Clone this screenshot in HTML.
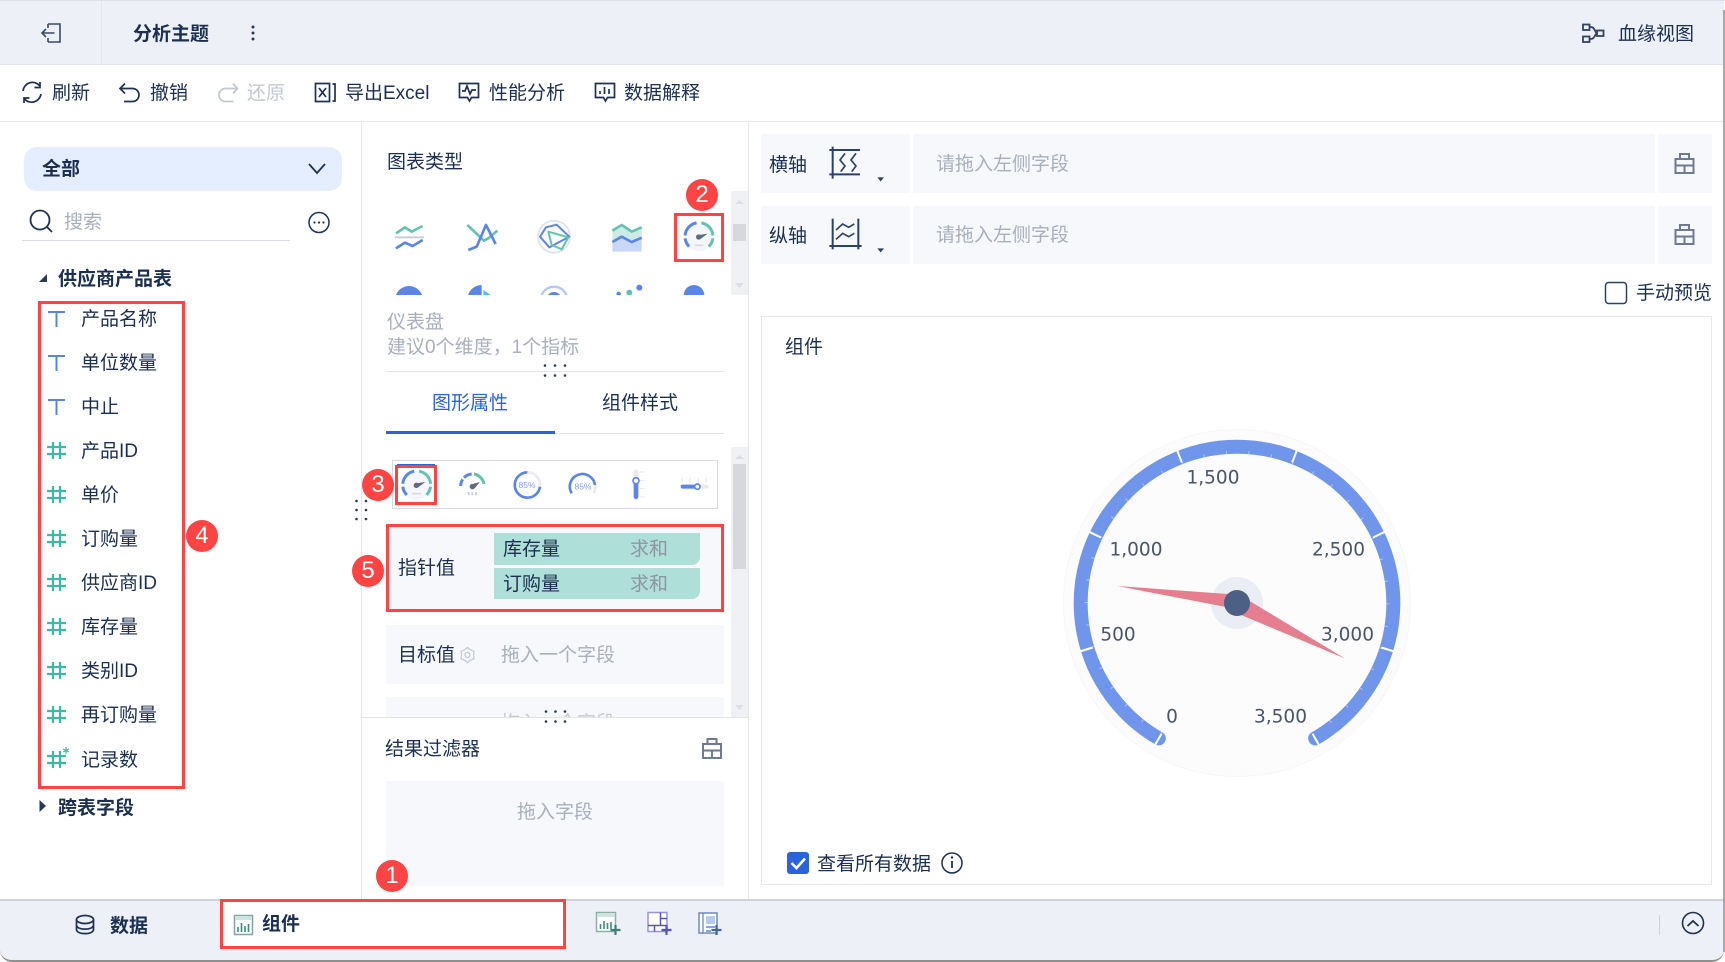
<!DOCTYPE html>
<html lang="zh">
<head>
<meta charset="utf-8">
<title>分析主题</title>
<style>
html,body{margin:0;padding:0;background:#fff;width:1725px;height:962px;overflow:hidden}
body{font-family:"Liberation Sans","Noto Sans CJK SC",sans-serif;color:#1c2f50;position:relative}
.b{position:absolute}
.t{position:absolute;white-space:nowrap;font-size:19px;line-height:26px;height:26px;margin:2px 0 0 0}
.bd{font-weight:700}
.g{color:#a9afbb}
.box{position:absolute;background:#f7f8fc}
.red{position:absolute;border:3px solid #ff4444;box-sizing:border-box}
.badge{position:absolute;width:32px;height:32px;border-radius:50%;background:#ff4444;color:#fff;text-align:center;font-size:24px;line-height:32px;font-family:"Liberation Sans",sans-serif}
svg.o{position:absolute;left:0;top:0}
.pill{position:absolute;left:494px;width:206px;background:#aedfd8;border-radius:0 0 8px 0}
</style>
</head>
<body>
<!-- window frame -->
<div class="b" style="left:0;top:0;width:1725px;height:1px;background:#dfe1e6"></div>
<div class="b" style="left:0;top:1px;width:1724px;height:63px;background:#edf0f6;border-bottom:1px solid #dfe3ec"></div>
<div class="b" style="left:101px;top:1px;width:1px;height:63px;background:#e3e6ee"></div>
<div class="b" style="left:0;top:121px;width:1724px;height:1px;background:#e6e8ee"></div>
<div class="b" style="left:361px;top:122px;width:1px;height:777px;background:#e6e8ee"></div>
<div class="b" style="left:748px;top:122px;width:1px;height:777px;background:#e6e8ee"></div>

<!-- top bar -->
<div class="t bd" style="left:133px;top:20px">分析主题</div>
<div class="t" style="left:1618px;top:20px">血缘视图</div>

<!-- toolbar -->
<div class="t" style="left:52px;top:79px">刷新</div>
<div class="t" style="left:150px;top:79px">撤销</div>
<div class="t" style="left:247px;top:79px;color:#c3c7d0">还原</div>
<div class="t" style="left:345px;top:79px">导出Excel</div>
<div class="t" style="left:489px;top:79px">性能分析</div>
<div class="t" style="left:624px;top:79px">数据解释</div>

<!-- left panel -->
<div class="b" style="left:24px;top:147px;width:318px;height:44px;border-radius:13px;background:#e5eeff"></div>
<div class="t bd" style="left:42px;top:155px">全部</div>
<div class="t g" style="left:64px;top:208px">搜索</div>
<div class="b" style="left:22px;top:240px;width:268px;height:1px;background:#d9dce6"></div>
<div class="t bd" style="left:58px;top:265px">供应商产品表</div>
<div class="t" style="left:81px;top:305px">产品名称</div>
<div class="t" style="left:81px;top:349px">单位数量</div>
<div class="t" style="left:81px;top:393px">中止</div>
<div class="t" style="left:81px;top:437px">产品ID</div>
<div class="t" style="left:81px;top:481px">单价</div>
<div class="t" style="left:81px;top:525px">订购量</div>
<div class="t" style="left:81px;top:569px">供应商ID</div>
<div class="t" style="left:81px;top:613px">库存量</div>
<div class="t" style="left:81px;top:657px">类别ID</div>
<div class="t" style="left:81px;top:701px">再订购量</div>
<div class="t" style="left:81px;top:746px">记录数</div>
<div class="t bd" style="left:58px;top:794px">跨表字段</div>

<!-- middle panel -->
<div class="t" style="left:387px;top:148px">图表类型</div>
<div class="b" style="left:731px;top:191px;width:17px;height:104px;background:#f0f1f4"></div>
<div class="b" style="left:733px;top:224px;width:13px;height:17px;background:#d6d8de"></div>
<div class="t g" style="left:387px;top:308px">仪表盘</div>
<div class="t g" style="left:387px;top:333px">建议0个维度，1个指标</div>
<div class="b" style="left:386px;top:371px;width:338px;height:1px;background:#e2e4ea"></div>
<div class="t" style="left:432px;top:389px;color:#2b63db">图形属性</div>
<div class="t" style="left:602px;top:389px">组件样式</div>
<div class="b" style="left:386px;top:433px;width:338px;height:1px;background:#e2e4ea"></div>
<div class="b" style="left:386px;top:431px;width:169px;height:3px;background:#2b63db"></div>
<div class="b" style="left:731px;top:447px;width:17px;height:270px;background:#f0f1f4"></div>
<div class="b" style="left:733px;top:464px;width:13px;height:105px;background:#d6d8de"></div>
<div class="b" style="left:392px;top:460px;width:326px;height:49px;box-sizing:border-box;border:1.5px solid #d6d9e4"></div>
<div class="b" style="left:397px;top:464px;width:38px;height:2px;background:#2b63db"></div>

<div class="box" style="left:386px;top:520px;width:338px;height:92px"></div>
<div class="pill" style="top:533px;height:32px"></div>
<div class="pill" style="top:568px;height:31px"></div>
<div class="t" style="left:503px;top:535px">库存量</div>
<div class="t" style="left:630px;top:535px;color:#8e95a3">求和</div>
<div class="t" style="left:503px;top:570px">订购量</div>
<div class="t" style="left:630px;top:570px;color:#8e95a3">求和</div>
<div class="t" style="left:398px;top:554px">指针值</div>

<div class="box" style="left:386px;top:625px;width:338px;height:59px"></div>
<div class="t" style="left:398px;top:641px">目标值</div>
<div class="t g" style="left:501px;top:641px">拖入一个字段</div>
<div class="box" style="left:386px;top:697px;width:338px;height:20px;overflow:hidden">
<div class="t" style="left:115px;top:12px;color:#c5c9d2">拖入一个字段</div>
</div>
<div class="b" style="left:362px;top:717px;width:386px;height:1px;background:#e2e4ea"></div>

<div class="t" style="left:385px;top:735px">结果过滤器</div>
<div class="box" style="left:386px;top:781px;width:338px;height:105px"></div>
<div class="t g" style="left:517px;top:798px">拖入字段</div>

<!-- right panel -->
<div class="box" style="left:761px;top:134px;width:149px;height:59px"></div>
<div class="box" style="left:913px;top:134px;width:742px;height:59px"></div>
<div class="box" style="left:1658px;top:134px;width:54px;height:59px"></div>
<div class="box" style="left:761px;top:206px;width:149px;height:58px"></div>
<div class="box" style="left:913px;top:206px;width:742px;height:58px"></div>
<div class="box" style="left:1658px;top:206px;width:54px;height:58px"></div>
<div class="t" style="left:769px;top:151px">横轴</div>
<div class="t" style="left:769px;top:222px">纵轴</div>
<div class="t g" style="left:936px;top:150px">请拖入左侧字段</div>
<div class="t g" style="left:936px;top:221px">请拖入左侧字段</div>
<div class="t" style="left:1636px;top:279px">手动预览</div>
<div class="b" style="left:761px;top:316px;width:951px;height:569px;box-sizing:border-box;border:1.5px solid #e6e8ee"></div>
<div class="t" style="left:785px;top:333px">组件</div>
<div class="t" style="left:817px;top:850px">查看所有数据</div>

<!-- bottom bar -->
<div class="b" style="left:0;top:899px;width:1724px;height:63px;box-sizing:border-box;background:#edf0f6;border-top:2px solid #d0d3de;border-bottom:2px solid #8f8f8f;border-radius:0 0 12px 12px"></div>
<div class="b" style="left:1723px;top:10px;width:2px;height:942px;background:#a8a8a8"></div>
<div class="b" style="left:222px;top:901px;width:343px;height:47px;background:#fff"></div>
<div class="t bd" style="left:110px;top:912px">数据</div>
<div class="t bd" style="left:262px;top:910px">组件</div>
<div class="b" style="left:1659px;top:915px;width:1px;height:20px;background:#d0d3de"></div>

<svg class="o" width="1725" height="962" viewBox="0 0 1725 962" fill="none">
<defs>
<g id="case" stroke="#6f7a8f" stroke-width="2"><path d="M1675.5 159h18v14h-18zM1680 159v-5h9v5M1675.5 165.500h18M1684.5 165.500v7.500"/></g>
<g id="gi" stroke-width="9">
<circle cx="1017" cy="320" r="44" fill="#f5f6f9"/>
<path d="M975.200 316.300A42 42 0 0 1 1009.700 278.600M987.300 349.700A42 42 0 0 1 975.300 325.100" stroke="#5b86e8"/>
<path d="M1024.300 278.600A42 42 0 0 1 1058.800 316.300M1058.700 325.100A42 42 0 0 1 1046.700 349.700" stroke="#62c4b0"/>
<circle cx="1016" cy="321" r="8" fill="#5f6b80"/>
<polygon points="1010,316 1043,311 1020,328" fill="#5f6b80"/>
<path d="M1004 346h26" stroke="#d6d9e2" stroke-width="5"/>
</g>
<clipPath id="cr"><rect x="360" y="190" width="370" height="105"/></clipPath>
</defs>

<!-- top bar icons -->
<path d="M48 24h12v18H48M48 24v4M48 38v4M54.500 33H42M46 29l-4 4 4 4" stroke="#3b4a63" stroke-width="1.600"/>
<g fill="#2a3a55"><circle cx="253" cy="27" r="1.500"/><circle cx="253" cy="33" r="1.500"/><circle cx="253" cy="39" r="1.500"/></g>
<g stroke="#33435f" stroke-width="1.800">
<rect x="1583" y="24.500" width="6.500" height="5.500"/><rect x="1583" y="36.500" width="6.500" height="5.500"/><rect x="1597" y="30.500" width="6.500" height="5.500"/>
<path d="M1589.500 27h1.500c4 0 4 6 6 6.300M1589.500 39h1.500c4 0 4-5.500 6-5.700"/>
</g>

<!-- toolbar icons -->
<g stroke="#1f3150" stroke-width="1.700">
<path d="M23 91a9.500 9.500 0 0 1 16.500-5.500M40 82v5.500h-5.500"/>
<path d="M41 94a9.500 9.500 0 0 1-16.500 5M24 103v-5h5.500"/>
<path d="M125 83.500l-5 5 5 5M120 88.500h12.500a6.500 6.500 0 0 1 0 13H124"/>
<path d="M315.500 83.500h14v18h-14zM319 88l7 9M326 88l-7 9M332.500 84h2.500v17h-2.500"/>
<path d="M459.500 83.500h19v14h-7l-2 3.500-2-3.500h-8zM462 91h3l2-5 3 8 2-4h4"/>
<path d="M595.500 83.500h19v14h-7l-2 3.500-2-3.500h-8zM600 94v-3M604.500 94v-7M609 94v-5"/>
</g>
<path d="M233 83.500l4.500 5-4.500 5M237.500 88.500h-12a6.500 6.500 0 0 0 0 13h8" stroke="#c3c7d0" stroke-width="1.700"/>

<!-- left icons -->
<path d="M309 164l8 9 8-9" stroke="#1f3150" stroke-width="1.800"/>
<circle cx="40" cy="220" r="9.500" stroke="#1f3150" stroke-width="1.800"/><path d="M47 227l5 5" stroke="#1f3150" stroke-width="1.800"/>
<circle cx="319" cy="222.500" r="10" stroke="#1f3150" stroke-width="1.500"/>
<g fill="#1f3150"><circle cx="314.500" cy="222.500" r="1.100"/><circle cx="319" cy="222.500" r="1.100"/><circle cx="323.500" cy="222.500" r="1.100"/></g>
<polygon points="39,282 47,282 47,274" fill="#2a3a55"/>
<polygon points="39.500,800 46,806 39.500,812" fill="#2a3a55"/>
<g stroke="#5b86d8" stroke-width="2"><path d="M48 312h17M56.500 312v15M48 356h17M56.500 356v15M48 400h17M56.500 400v15"/></g>
<g stroke="#3fb8a6" stroke-width="2.200">
<path d="M53 442v17M60 442v17M47 447h19M47 454h19"/>
<path d="M53 486v17M60 486v17M47 491h19M47 498h19"/>
<path d="M53 530v17M60 530v17M47 535h19M47 542h19"/>
<path d="M53 574v17M60 574v17M47 579h19M47 586h19"/>
<path d="M53 618v17M60 618v17M47 623h19M47 630h19"/>
<path d="M53 662v17M60 662v17M47 667h19M47 674h19"/>
<path d="M53 706v17M60 706v17M47 711h19M47 718h19"/>
<path d="M53 751v17M60 751v17M47 756h19M47 763h19"/>
</g>
<path d="M66 747v7M63 749l6 3M69 749l-6 3" stroke="#3fb8a6" stroke-width="1.200"/>

<!-- chart type icons (zoom coordinates) -->
<g clip-path="url(#cr)">
<g transform="translate(360,130) scale(.33333)" stroke-width="8" stroke-linejoin="round">
<polyline points="108,310 135,292 155,305 188,288" stroke="#62c4b0"/>
<path d="M105 322h87" stroke="#c9cdd8" stroke-width="6"/>
<polyline points="108,355 135,338 158,348 188,330" stroke="#5b86e8"/>

<polyline points="322,285 372,332 385,325 412,302" stroke="#62c4b0"/>
<polyline points="325,360 350,350 378,285 407,342" stroke="#5b86e8"/>

<circle cx="582" cy="320" r="48" stroke="#dfe2ea" stroke-width="5" fill="#fafbfc"/>
<polygon points="590,284 628,320 568,352 540,320 558,292" stroke="#5b86e8" stroke-width="6"/>
<polygon points="565,305 625,322 605,358 575,345" stroke="#62c4b0" stroke-width="6"/>

<polygon points="757,305 785,290 815,310 845,295 845,330 757,330" fill="#cdebe5" stroke="none"/>
<polyline points="757,302 785,285 815,305 845,292" stroke="#62c4b0"/>
<polygon points="757,338 785,322 815,338 845,325 845,365 757,365" fill="#c8d7f8" stroke="none"/>
<polyline points="757,336 785,320 815,336 845,323" stroke="#5b86e8"/>

<use href="#gi"/>

<circle cx="147" cy="510" r="42" fill="#5b86e8" stroke="none"/>
<path d="M365 465A42 42 0 1 0 365 550z" fill="#5b86e8" stroke="none"/>
<path d="M370 480 L392 495 L370 510z" fill="#4fc3f0" stroke="none"/>
<circle cx="582" cy="510" r="40" stroke="#b5c8f5" stroke-width="7"/>
<circle cx="582" cy="510" r="24" fill="#5b86e8" stroke="none"/>
<circle cx="776" cy="492" r="7" fill="#5b86e8" stroke="none"/>
<circle cx="808" cy="488" r="9" fill="#62c4b0" stroke="none"/>
<circle cx="838" cy="473" r="9" fill="#5b86e8" stroke="none"/>
<circle cx="1002" cy="496" r="31" fill="#5b86e8" stroke="none"/>
</g>
</g>
<polygon points="735,204 739.500,200 744,204" fill="#dcdee3"/>
<polygon points="735,283 739.500,288 744,283" fill="#dcdee3"/>

<!-- gauge subtype icons -->
<g transform="translate(340,430) scale(.33333)" stroke-linejoin="round">
<use href="#gi" transform="translate(-787,-155)"/>

<path d="M362 168A38 38 0 0 1 368 148" stroke="#5b86e8" stroke-width="9"/>
<path d="M372 143A38 38 0 0 1 395 132" stroke="#5b86e8" stroke-width="9"/>
<path d="M402 132A38 38 0 0 1 432 162" stroke="#62c4b0" stroke-width="9"/>
<circle cx="397" cy="170" r="8" fill="#5f6b80"/>
<polygon points="390,164 420,156 402,177" fill="#5f6b80"/>
<path d="M386 186v10M397 186v10M408 186v10" stroke="#c9cdd8" stroke-width="5"/>

<circle cx="562" cy="165" r="38" stroke="#eaecf1" stroke-width="8"/>
<path d="M562 127A38 38 0 1 0 600 170" stroke="#5b86e8" stroke-width="8"/>
<path d="M765 165Q768 178 761 190" stroke="#eaecf1" stroke-width="8"/>
<path d="M695 190A38 38 0 1 1 765 165" stroke="#5b86e8" stroke-width="8"/>

<path d="M888 125v78" stroke="#e8eaef" stroke-width="14" stroke-linecap="round"/>
<path d="M888 155v45" stroke="#5b86e8" stroke-width="14" stroke-linecap="round"/>
<circle cx="888" cy="152" r="9" fill="#fff" stroke="#5b86e8" stroke-width="5"/>
<path d="M900 126h14M900 152h14M900 176h14M900 201h14" stroke="#e8eaef" stroke-width="3"/>

<path d="M1028 170h72" stroke="#e8eaef" stroke-width="12" stroke-linecap="round"/>
<path d="M1028 170h42" stroke="#5b86e8" stroke-width="12" stroke-linecap="round"/>
<circle cx="1072" cy="170" r="8" fill="#fff" stroke="#5b86e8" stroke-width="5"/>
<path d="M1026 146v12M1050 146v12M1075 146v12M1098 146v12" stroke="#dfe2e8" stroke-width="3"/>
</g>
<text x="527" y="488" text-anchor="middle" font-family="Liberation Sans,sans-serif" font-size="8.500" fill="#7f9eea">85%</text>
<text x="583" y="489.500" text-anchor="middle" font-family="Liberation Sans,sans-serif" font-size="8.500" fill="#7f9eea">85%</text>

<!-- scrollbar arrows -->
<polygon points="735,459 739.500,455 744,459" fill="#dcdee3"/>
<polygon points="735,705 739.500,710 744,705" fill="#dcdee3"/>

<!-- gear -->
<circle cx="467.500" cy="655" r="2.500" stroke="#c1c6d2" stroke-width="1.200"/>
<polygon points="467.500,647.500 470.500,649.800 474,651.250 473.500,655 474,658.750 470.500,660.200 467.500,662.500 464.500,660.200 461,658.750 461.500,655 461,651.250 464.500,649.800" stroke="#c1c6d2" stroke-width="1.200" stroke-linejoin="round"/>

<!-- drag dots -->
<g fill="#2a3a55">
<circle cx="545" cy="365.500" r="1.300"/><circle cx="555" cy="365.500" r="1.300"/><circle cx="565" cy="365.500" r="1.300"/>
<circle cx="545" cy="375.500" r="1.300"/><circle cx="555" cy="375.500" r="1.300"/><circle cx="565" cy="375.500" r="1.300"/>
<circle cx="546" cy="711.500" r="1.300"/><circle cx="555.500" cy="711.500" r="1.300"/><circle cx="565" cy="711.500" r="1.300"/>
<circle cx="546" cy="721.500" r="1.300"/><circle cx="555.500" cy="721.500" r="1.300"/><circle cx="565" cy="721.500" r="1.300"/>
<circle cx="356.500" cy="501" r="1.300"/><circle cx="366" cy="501" r="1.300"/>
<circle cx="356.500" cy="510" r="1.300"/><circle cx="366" cy="510" r="1.300"/>
<circle cx="356.500" cy="519" r="1.300"/><circle cx="366" cy="519" r="1.300"/>
</g>

<use href="#case"/>
<use href="#case" transform="translate(0,71)"/>
<use href="#case" transform="translate(-972.500,585)"/>

<!-- axis icons -->
<g transform="translate(750,120) scale(.33333)" stroke="#2d4263" stroke-width="6">
<path d="M248 80v96M238 90h92M238 163h92"/>
<path d="M285 100l-15 20 15 18-13 17M318 100l-15 20 15 18-13 17" stroke-width="5"/>
<path d="M248 296v92M325 296v92M238 378h97"/>
<path d="M258 330l20-18 18 10 17-10M258 358l20-18 18 10 17-10" stroke-width="5"/>
<polygon points="382,172 402,172 392,184" fill="#2d4263" stroke="none"/>
<polygon points="382,385 402,385 392,397" fill="#2d4263" stroke="none"/>
</g>

<!-- checkboxes -->
<rect x="1605.500" y="282.500" width="21" height="21" rx="3" stroke="#2d4263" stroke-width="1.500"/>
<rect x="787" y="852" width="22" height="22" rx="3" fill="#2b63db"/>
<path d="M791.500 863l5 5 8.500-9.500" stroke="#fff" stroke-width="2.500"/>
<circle cx="952" cy="863" r="10" stroke="#1f3150" stroke-width="1.500"/>
<path d="M952 861v7" stroke="#1f3150" stroke-width="1.800"/><circle cx="952" cy="857.500" r="1.200" fill="#1f3150"/>

<!-- gauge -->
<circle cx="1237" cy="603" r="173.500" fill="#fcfcfc" stroke="#f6f6f7" stroke-width="1"/>
<path d="M1158.850 738.400A156.300 156.300 0 1 1 1315.150 738.400" stroke="#7096ec" stroke-width="14" stroke-linecap="round"/>
<path d="M1161.500 733.800A151 151 0 1 1 1312.500 733.800" stroke="#fff" stroke-opacity=".45" stroke-width="3" stroke-dasharray="1 21.590"/>
<g stroke="#fff" stroke-width="2">
<path d="M1237 452v-14" transform="rotate(-150 1237 603)"/>
<path d="M1237 452v-14" transform="rotate(-107.140 1237 603)"/>
<path d="M1237 452v-14" transform="rotate(-64.290 1237 603)"/>
<path d="M1237 452v-14" transform="rotate(-21.430 1237 603)"/>
<path d="M1237 452v-14" transform="rotate(21.430 1237 603)"/>
<path d="M1237 452v-14" transform="rotate(64.290 1237 603)"/>
<path d="M1237 452v-14" transform="rotate(107.140 1237 603)"/>
<path d="M1237 452v-14" transform="rotate(150 1237 603)"/>
</g>
<g font-family="DejaVu Sans,sans-serif" font-size="18.500" fill="#4a5568" text-anchor="middle">
<text x="1213" y="483.500">1,500</text>
<text x="1136" y="555.500">1,000</text>
<text x="1118" y="640.500">500</text>
<text x="1172" y="722.500">0</text>
<text x="1280.500" y="722.500">3,500</text>
<text x="1347.500" y="640.500">3,000</text>
<text x="1338.500" y="555.500">2,500</text>
</g>
<circle cx="1237" cy="603" r="26" fill="#ebedf4"/>
<polygon points="1117.300,586 1228,594 1226,607" fill="#e57f8f"/>
<polygon points="1345,658.500 1248,600 1241,615" fill="#e57f8f"/>
<circle cx="1237" cy="603" r="13" fill="#4c6085"/>

<!-- bottom icons -->
<g stroke="#1f3150" stroke-width="1.700">
<ellipse cx="85" cy="919.500" rx="8.500" ry="4"/>
<path d="M76.500 919.500v10c0 5.500 17 5.500 17 0v-10M76.500 925c0 5.500 17 5.500 17 0"/>
</g>
<g>
<rect x="234.500" y="915.500" width="18" height="19" fill="#fff" stroke="#7fa6a3" stroke-width="1.500"/>
<rect x="235" y="916" width="17" height="4" fill="#cfe3df"/>
<path d="M238 932v-5M241.500 932v-9M245 932v-6M248.500 932v-8" stroke="#3d8a80" stroke-width="1.600"/>
</g>
<g>
<rect x="596.500" y="912.500" width="19" height="19" fill="#fff" stroke="#8bb0aa" stroke-width="1.500"/>
<rect x="597" y="913" width="18" height="4" fill="#cfe3df"/>
<path d="M600.500 929v-5M604 929v-8M607.500 929v-6M611 929v-7" stroke="#3d8a80" stroke-width="1.600"/>
<path d="M615.500 925v10M610.500 930h10" stroke="#3f7f78" stroke-width="2.200"/>
<rect x="648" y="912.500" width="19" height="19" fill="#fff" stroke="#9a94d6" stroke-width="1.500"/>
<path d="M660.500 912.500v13M648 925.500h19M654.500 925.500v6M660.500 918.500h6.500" stroke="#5a55b0" stroke-width="1.500"/>
<path d="M666.500 925v10M661.500 930h10" stroke="#5a55b0" stroke-width="2.200"/>
<rect x="699" y="913" width="18" height="20" fill="#fff" stroke="#6d87c4" stroke-width="1.500"/>
<path d="M703 913v20" stroke="#6d87c4" stroke-width="1.300"/>
<rect x="706" y="916" width="9" height="8" fill="#b7cbee"/>
<path d="M706 927h9M706 931h5" stroke="#5b86d8" stroke-width="1.500"/>
<path d="M716.500 925v10M711.500 930h10" stroke="#46669f" stroke-width="2.200"/>
</g>
<circle cx="1693" cy="923" r="10.500" stroke="#1f3150" stroke-width="1.600"/>
<path d="M1687.500 926l5.500-5 5.500 5" stroke="#1f3150" stroke-width="1.800"/>
</svg>

<!-- red annotation frames -->
<div class="red" style="left:38px;top:301px;width:147px;height:488px"></div>
<div class="red" style="left:674px;top:213px;width:50px;height:49px"></div>
<div class="red" style="left:395px;top:465px;width:42px;height:40px"></div>
<div class="red" style="left:386px;top:524px;width:338px;height:88px"></div>
<div class="red" style="left:220px;top:899px;width:346px;height:50px"></div>
<div class="badge" style="left:376px;top:860px">1</div>
<div class="badge" style="left:686px;top:179px">2</div>
<div class="badge" style="left:362px;top:469px">3</div>
<div class="badge" style="left:186px;top:520px">4</div>
<div class="badge" style="left:352px;top:555px">5</div>
</body>
</html>
